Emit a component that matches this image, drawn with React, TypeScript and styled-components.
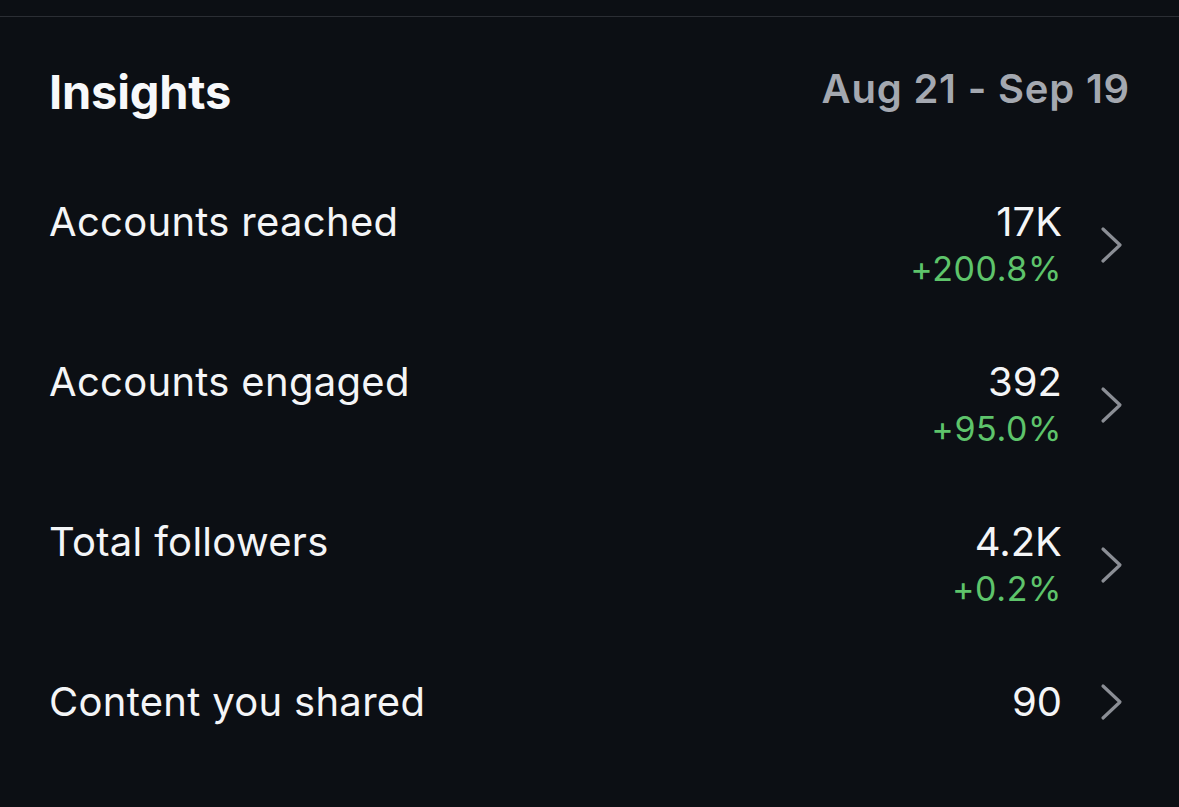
import React, { FC } from 'react';
import styled, { createGlobalStyle } from 'styled-components';

const GlobalStyle = createGlobalStyle`
   html, body {
      margin: 0;
      padding: 0;
      background: #0c0f14;
   }
   body {
      font-family: Inter, "Noto Sans", "Liberation Sans", sans-serif;
      color: #f4f5f7;
      -webkit-font-smoothing: antialiased;
   }
`;

interface Metric {
   label: string;
   value: string;
   change?: string;
}

const metrics: Metric[] = [
   { label: 'Accounts reached', value: '17K', change: '+200.8%' },
   { label: 'Accounts engaged', value: '392', change: '+95.0%' },
   { label: 'Total followers', value: '4.2K', change: '+0.2%' },
   { label: 'Content you shared', value: '90' },
];

const Chevron: FC = () => (
   <ChevronSvg viewBox="0 0 24 38" fill="none">
      <path
         d="M3 3 L20 19 L3 35"
         stroke="#8b8e95"
         strokeWidth="3.2"
         strokeLinecap="round"
         strokeLinejoin="round"
      />
   </ChevronSvg>
);

const MetricRow: FC<Metric> = ({ label, value, change }) => (
   <Row>
      <Label>{label}</Label>
      <Right>
         <Values>
            <Value>{value}</Value>
            {change && <Change>{change}</Change>}
         </Values>
         <Chevron />
      </Right>
   </Row>
);

const App: FC = () => {
   return (
      <Page>
         <GlobalStyle />
         <Divider />
         <Content>
            <Header>
               <Title>Insights</Title>
               <DateRange>Aug 21 - Sep 19</DateRange>
            </Header>
            <List>
               {metrics.map((m) => (
                  <MetricRow key={m.label} {...m} />
               ))}
            </List>
         </Content>
      </Page>
   );
};

const Page = styled.div`
   width: 1179px;
   height: 807px;
   overflow: hidden;
   background: #0c0f14;
   padding-top: 16px;
   box-sizing: border-box;
`;

const Divider = styled.div`
   height: 1px;
   background: #2b2e34;
`;

const Content = styled.div`
   padding: 0 55px 0 49px;
`;

const Header = styled.div`
   display: flex;
   align-items: center;
   justify-content: space-between;
   margin-top: 47px;
   height: 56px;
   margin-bottom: 78px;
`;

const Title = styled.h1`
   margin: 0;
   font-size: 47px;
   line-height: 56px;
   font-weight: 700;
   letter-spacing: -0.2px;
   color: #f7f8fa;
`;

const DateRange = styled.span`
   font-size: 40px;
   line-height: 48px;
   font-weight: 600;
   letter-spacing: 0.8px;
   color: #a4a8b0;
   margin-top: -6px;
   margin-right: -6px;
`;

const List = styled.div`
   display: flex;
   flex-direction: column;
`;

const Row = styled.div`
   display: flex;
   justify-content: space-between;
   align-items: flex-start;
   height: 160px;
`;

const Label = styled.span`
   font-size: 40px;
   line-height: 48px;
   font-weight: 400;
   letter-spacing: 0.3px;
   color: #f4f5f7;
`;

const Right = styled.div`
   display: flex;
   align-items: center;
   gap: 38px;
`;

const Values = styled.div`
   display: flex;
   flex-direction: column;
   align-items: flex-end;
`;

const Value = styled.span`
   font-size: 40px;
   line-height: 48px;
   font-weight: 400;
   color: #f4f5f7;
`;

const Change = styled.span`
   font-size: 34px;
   line-height: 46px;
   font-weight: 400;
   letter-spacing: 0.6px;
   color: #5ec46b;
`;

const ChevronSvg = styled.svg`
   width: 24px;
   height: 38px;
   flex-shrink: 0;
`;

export default App;
